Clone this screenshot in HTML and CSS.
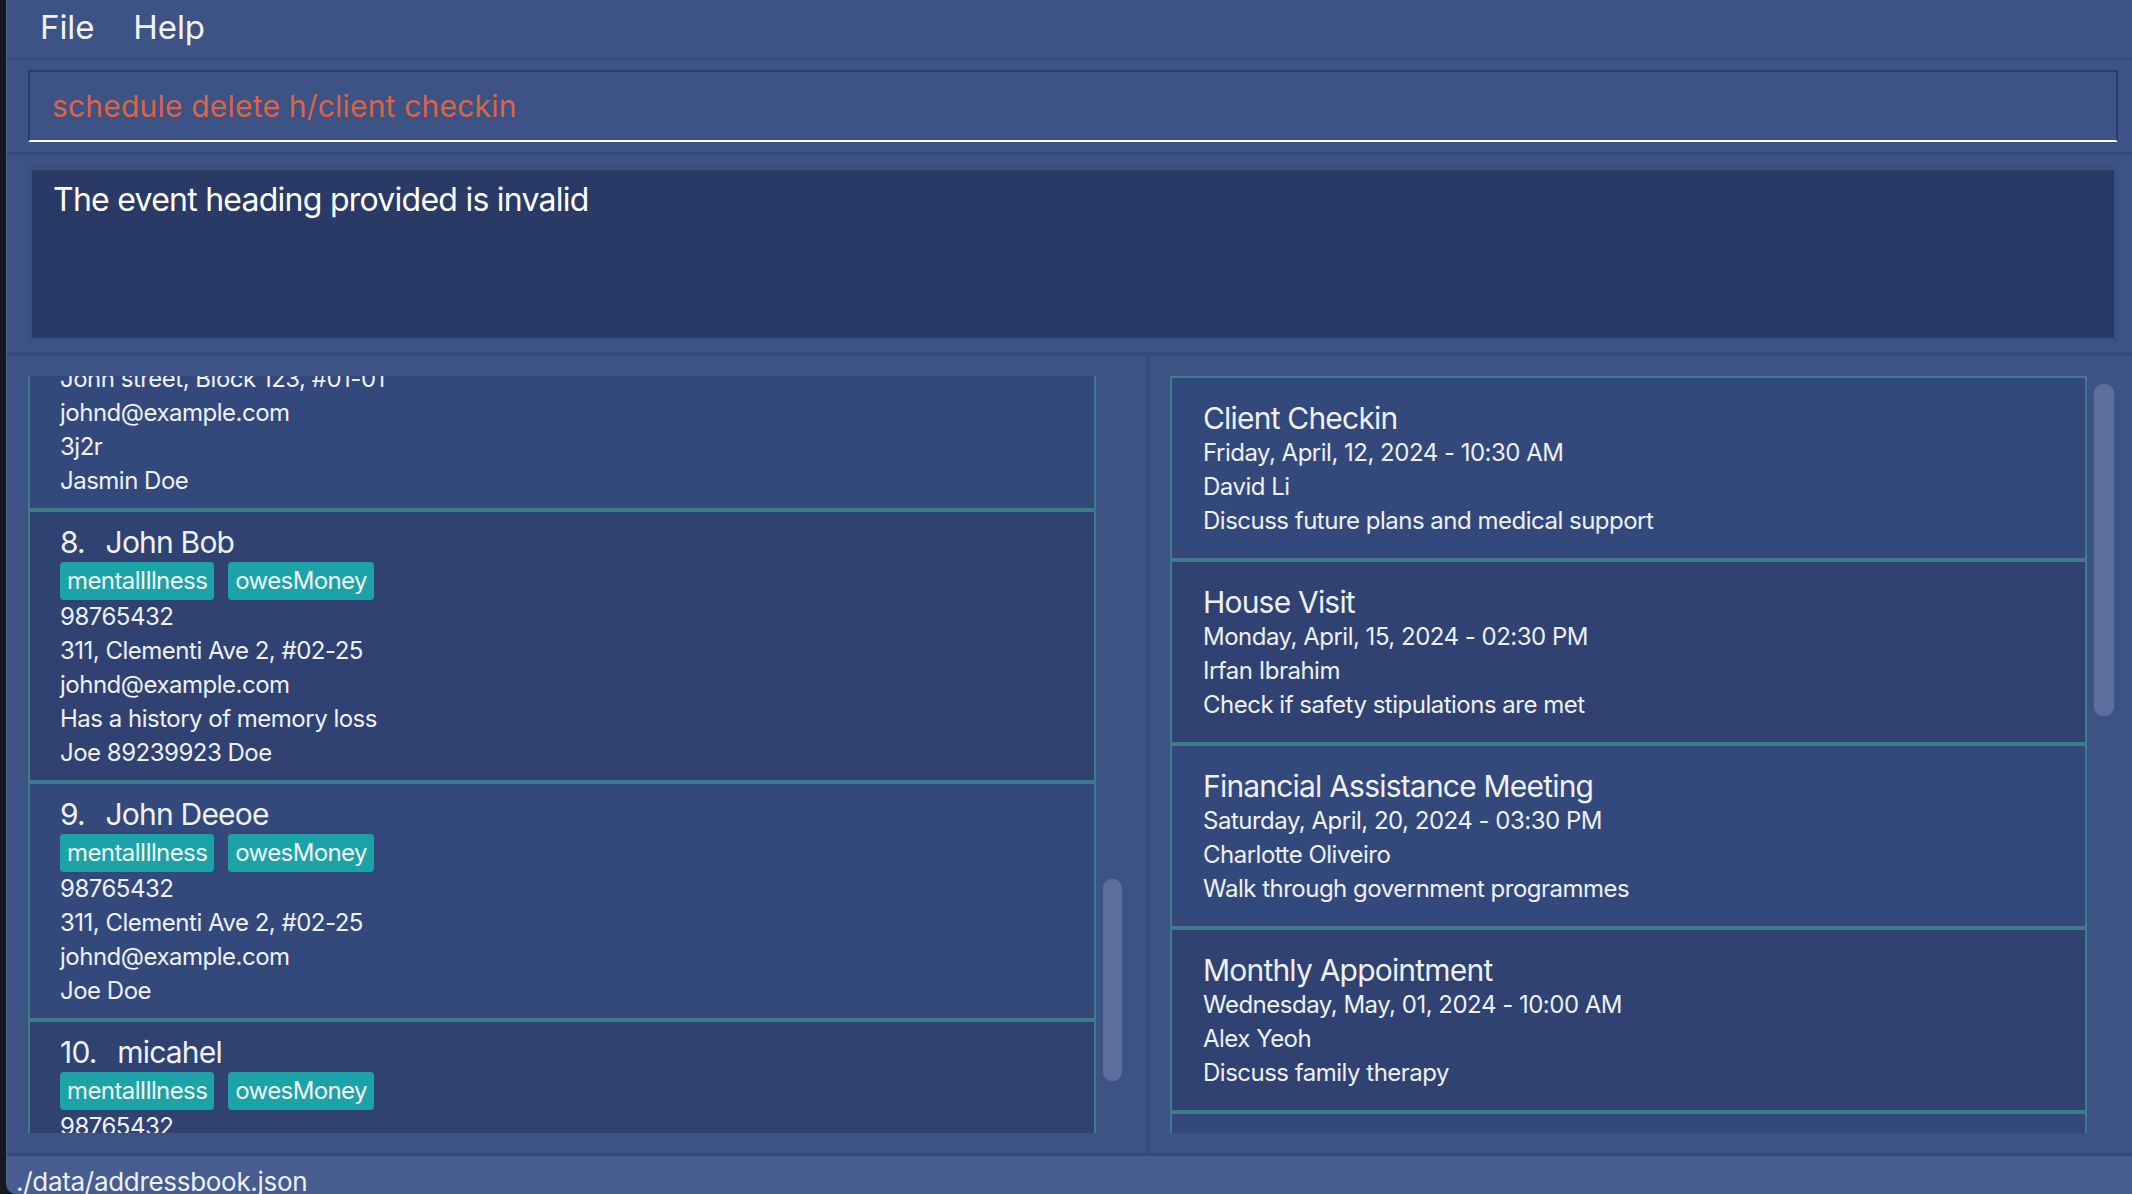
FILE: index.html
```html
<!DOCTYPE html>
<html>
<head>
<meta charset="utf-8">
<link rel="stylesheet" href="styles.css">
</head>
<body>
<div class="edge"></div>
<div class="window">
  <div class="menubar"><span>File</span><span>Help</span></div>
  <div class="cmd-area">
    <div class="cmd-box">schedule delete h/client checkin</div>
  </div>
  <div class="result-area">
    <div class="result-box">The event heading provided is invalid</div>
  </div>
  <div class="panels">
    <div class="panel person-panel">
      <div class="viewport person-viewport">
        <div class="card person-card odd partial">
          <div class="line">John street, Block 123, #01-01</div>
          <div class="line">johnd@example.com</div>
          <div class="line">3j2r</div>
          <div class="line">Jasmin Doe</div>
        </div>
        <div class="card person-card even">
          <div class="name"><span class="idx">8.</span> John Bob</div>
          <div class="tags"><span class="tag">mentalIllness</span><span class="tag">owesMoney</span></div>
          <div class="line">98765432</div>
          <div class="line">311, Clementi Ave 2, #02-25</div>
          <div class="line">johnd@example.com</div>
          <div class="line">Has a history of memory loss</div>
          <div class="line">Joe 89239923 Doe</div>
        </div>
        <div class="card person-card odd">
          <div class="name"><span class="idx">9.</span> John Deeoe</div>
          <div class="tags"><span class="tag">mentalIllness</span><span class="tag">owesMoney</span></div>
          <div class="line">98765432</div>
          <div class="line">311, Clementi Ave 2, #02-25</div>
          <div class="line">johnd@example.com</div>
          <div class="line">Joe Doe</div>
        </div>
        <div class="card person-card even">
          <div class="name"><span class="idx">10.</span> micahel</div>
          <div class="tags"><span class="tag">mentalIllness</span><span class="tag">owesMoney</span></div>
          <div class="line">98765432</div>
        </div>
      </div>
      <div class="track person-track"><div class="thumb person-thumb"></div></div>
    </div>
    <div class="panel event-panel">
      <div class="viewport event-viewport">
        <div class="card event-card odd">
          <div class="title">Client Checkin</div>
          <div class="line">Friday, April, 12, 2024 - 10:30 AM</div>
          <div class="line">David Li</div>
          <div class="line">Discuss future plans and medical support</div>
        </div>
        <div class="card event-card even">
          <div class="title">House Visit</div>
          <div class="line">Monday, April, 15, 2024 - 02:30 PM</div>
          <div class="line">Irfan Ibrahim</div>
          <div class="line">Check if safety stipulations are met</div>
        </div>
        <div class="card event-card odd">
          <div class="title">Financial Assistance Meeting</div>
          <div class="line">Saturday, April, 20, 2024 - 03:30 PM</div>
          <div class="line">Charlotte Oliveiro</div>
          <div class="line">Walk through government programmes</div>
        </div>
        <div class="card event-card even">
          <div class="title">Monthly Appointment</div>
          <div class="line">Wednesday, May, 01, 2024 - 10:00 AM</div>
          <div class="line">Alex Yeoh</div>
          <div class="line">Discuss family therapy</div>
        </div>
        <div class="card event-card odd empty"></div>
      </div>
      <div class="track event-track"><div class="thumb event-thumb"></div></div>
    </div>
  </div>
  <div class="status">./data/addressbook.json</div>
</div>
</body>
</html>
```
FILE: styles.css
```css
* { box-sizing: border-box; }
html, body { margin: 0; padding: 0; }
body {
  width: 2132px;
  height: 1194px;
  overflow: hidden;
  display: flex;
  background: #15181f;
  font-family: "Inter", "Liberation Sans", sans-serif;
  color: #eef0f5;
}
.edge { width: 6px; flex: none; }
.window {
  flex: 1;
  display: flex;
  flex-direction: column;
  background: #3d5385;
  border-left: 1px solid #4d6292;
  border-bottom-left-radius: 10px;
  overflow: hidden;
}
.menubar {
  height: 60px;
  flex: none;
  border-bottom: 2px solid #354a7a;
  display: flex;
  gap: 39px;
  padding-left: 33px;
  font-size: 33px;
  line-height: 54px;
  color: #f2f2f2;
  letter-spacing: -0.1px;
}
.cmd-area {
  height: 95px;
  flex: none;
  border-bottom: 3px solid #354a7a;
  padding: 10px 14px 0 21px;
}
.cmd-box {
  height: 72px;
  border: 2px solid #2b3d6a;
  border-bottom-color: #ffffff;
  padding: 1px 0 0 22px;
  font-size: 30px;
  line-height: 67px;
  color: #dc6443;
  white-space: nowrap;
  letter-spacing: 0.2px;
}
.result-area {
  height: 201px;
  flex: none;
  border-bottom: 4px solid #354a7a;
  padding: 11px 14px 0 21px;
}
.result-box {
  height: 176px;
  border: 4px solid #3a5082;
  background: #293a67;
  padding: 10px 21px;
  font-size: 32px;
  line-height: 40px;
  color: #ffffff;
  letter-spacing: -0.75px;
}
.panels {
  height: 800px;
  flex: none;
  display: flex;
  border-bottom: 3px solid #354a7a;
}
.panel { display: flex; height: 100%; }
.person-panel {
  width: 1143px;
  flex: none;
  padding: 20px 0 20px 21px;
  border-right: 4px solid #374c7c;
}
.event-panel {
  flex: 1;
  padding: 20px 18px 20px 20px;
}
.viewport { height: 100%; overflow: hidden; }
.person-viewport { width: 1068px; flex: none; }
.event-viewport { flex: 1; }
.track { flex: none; padding-left: 7px; }
.person-track { width: 50px; }
.event-track { width: 27px; }
.thumb { background: #5c6f9f; border-radius: 9px; }
.person-thumb { width: 19px; height: 202px; margin-top: 503px; }
.event-thumb { width: 20px; height: 332px; margin-top: 8px; }

.card { border: 2px solid #3d7b8c; }
.card.odd { background: #33497b; }
.card.even { background: #2f4271; }
.person-card { padding: 12px 0 10px 30px; }
.person-card.partial { margin-top: -16px; padding-top: 0; }
.event-card { padding: 22px 0 20px 31px; }
.event-card.empty { height: 184px; }
.name, .title { font-size: 30px; line-height: 36px; white-space: nowrap; letter-spacing: -0.8px; }
.idx { margin-right: 13px; }
.line {
  font-size: 24px;
  line-height: 34px;
  white-space: nowrap;
  letter-spacing: -0.5px;
}
.tags { display: flex; gap: 14px; margin-top: 2px; height: 38px; }
.tag {
  background: #1ba3a7;
  border-radius: 4px;
  padding: 0 7px;
  font-size: 24px;
  line-height: 38px;
  color: #f4f6f8;
  letter-spacing: -0.6px;
}
.status {
  flex: 1;
  background: #475d8f;
  padding: 7px 0 0 9px;
  font-size: 26px;
  line-height: 38px;
  color: #eef0f5;
  white-space: nowrap;
  letter-spacing: -0.3px;
}
```
